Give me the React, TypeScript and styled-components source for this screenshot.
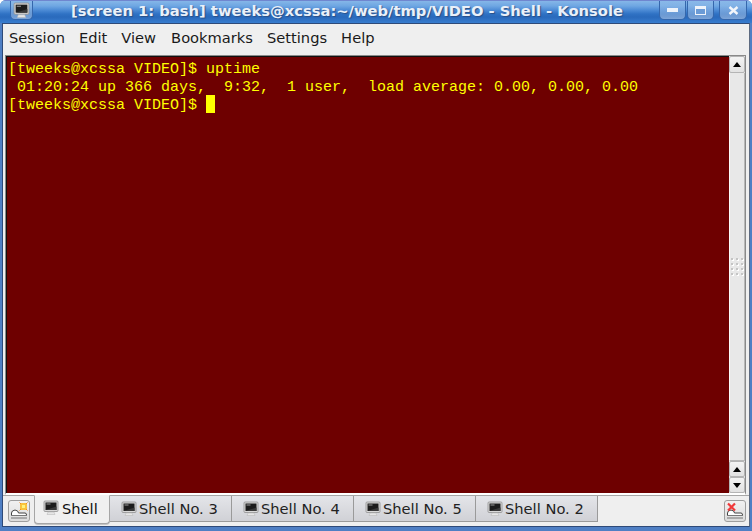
import React from 'react';
import styled, { createGlobalStyle } from 'styled-components';

const GlobalStyle = createGlobalStyle`
  html, body {
    margin: 0;
    padding: 0;
    background: #ffffff;
  }
  * {
    box-sizing: border-box;
  }
`;

const ScreenIcon = ({ size = 16 }: { size?: number }) => (
  <svg width={size} height={size} viewBox="0 0 16 16">
    <rect x="1" y="1" width="14" height="10.5" rx="1" fill="#d9d9d9" stroke="#8f8f8f" strokeWidth="0.8" />
    <rect x="2.5" y="2.5" width="11" height="7.5" fill="#1c1c1c" />
    <rect x="3.5" y="3.5" width="4" height="1" fill="#9a9a9a" />
    <path d="M2.5 10 L13.5 6.5 V10 Z" fill="#3a3a3a" />
    <path d="M5 12 H11 L12 14.5 H4 Z" fill="#e6e6e6" stroke="#b5b5b5" strokeWidth="0.5" />
  </svg>
);

const NewSessionIcon = () => (
  <svg width="18" height="18" viewBox="0 0 18 18">
    <path d="M1 16 H17 M1 13.5 H17" stroke="#777" strokeWidth="1" />
    <path d="M1.5 13 V11 Q1.5 8.5 5 8 Q8.5 8.5 8.5 11 H15 Q16.5 11 16.5 13" fill="#fff" stroke="#444" strokeWidth="1" />
    <rect x="10" y="1" width="7" height="7" fill="#f9c23c" />
    <rect x="12" y="3" width="3" height="3" fill="#fff27a" />
    <path d="M9.5 0.5 L11 2 M17.5 0.5 L16 2 M9.5 8.5 L11 7 M17.5 8.5 L16 7" stroke="#f08a24" strokeWidth="1" />
  </svg>
);

const CloseSessionIcon = () => (
  <svg width="18" height="18" viewBox="0 0 18 18">
    <path d="M1 16 H17 M1 13.5 H17" stroke="#777" strokeWidth="1" />
    <path d="M1.5 13 V11 Q1.5 8.5 5 8 Q8.5 8.5 8.5 11 H15 Q16.5 11 16.5 13" fill="#fff" stroke="#444" strokeWidth="1" />
    <path d="M2 1.5 L9 8.5 M9 1.5 L2 8.5" stroke="#f0393a" strokeWidth="2.2" />
  </svg>
);

const tabs = ['Shell No. 3', 'Shell No. 4', 'Shell No. 5', 'Shell No. 2'];
const menus = ['Session', 'Edit', 'View', 'Bookmarks', 'Settings', 'Help'];

const App: React.FC = () => (
  <>
    <GlobalStyle />
    <Window>
      <TitleBar>
        <AppButton>
          <ScreenIcon size={17} />
        </AppButton>
        <TitleText>[screen 1: bash] tweeks@xcssa:~/web/tmp/VIDEO - Shell - Konsole</TitleText>
        <WindowButtons>
          <WindowButton>
            <MinGlyph />
          </WindowButton>
          <WindowButton>
            <MaxGlyph />
          </WindowButton>
          <CloseButton>
            <svg width="11" height="9" viewBox="0 0 11 9">
              <path d="M1.5 1 L9.5 8 M9.5 1 L1.5 8" stroke="#f2f5fa" strokeWidth="2.4" />
            </svg>
          </CloseButton>
        </WindowButtons>
      </TitleBar>
      <Client>
        <MenuBar>
          {menus.map((m) => (
            <MenuItem key={m}>{m}</MenuItem>
          ))}
        </MenuBar>
        <TerminalFrame>
          <Terminal>
            <Line>[tweeks@xcssa VIDEO]$ uptime</Line>
            <Line> 01:20:24 up 366 days,  9:32,  1 user,  load average: 0.00, 0.00, 0.00</Line>
            <Line>
              [tweeks@xcssa VIDEO]$ <Cursor />
            </Line>
          </Terminal>
          <ScrollBar>
            <ScrollButton $top>
              <ArrowUp />
            </ScrollButton>
            <ScrollThumb>
              <Grip>
                {Array.from({ length: 12 }).map((_, i) => (
                  <GripDot key={i} />
                ))}
              </Grip>
            </ScrollThumb>
            <ScrollButton>
              <ArrowUp />
            </ScrollButton>
            <ScrollButton>
              <ArrowDown />
            </ScrollButton>
          </ScrollBar>
        </TerminalFrame>
        <TabBar>
          <CornerButton>
            <NewSessionIcon />
          </CornerButton>
          <ActiveTab>
            <ScreenIcon />
            <span>Shell</span>
          </ActiveTab>
          {tabs.map((t) => (
            <Tab key={t}>
              <ScreenIcon />
              <span>{t}</span>
            </Tab>
          ))}
          <TabSpacer />
          <CornerButton>
            <CloseSessionIcon />
          </CornerButton>
        </TabBar>
      </Client>
    </Window>
  </>
);

export default App;

const Window = styled.div`
  width: 752px;
  height: 531px;
  display: flex;
  flex-direction: column;
  overflow: hidden;
  border-radius: 6px 6px 0 0;
  background: #4f7fc4;
  padding: 0 2px 4px 2px;
  font-family: 'DejaVu Sans', sans-serif;
`;

const TitleBar = styled.div`
  height: 23px;
  flex: none;
  margin: 0 -2px;
  padding: 0 5px 0 10px;
  display: flex;
  align-items: flex-start;
  border-top: 1px solid #6f86cf;
  background: linear-gradient(to bottom, #85b6e8 0, #6ea6e2 5px, #4d8cd6 9px, #2f72c4 13px, #2a6abc 16px, #3a80d2 23px);
`;

const AppButton = styled.div`
  width: 23px;
  height: 19px;
  display: flex;
  align-items: center;
  justify-content: center;
  border-radius: 0 0 5px 5px;
  background: linear-gradient(to bottom, rgba(255, 255, 255, 0.04), rgba(255, 255, 255, 0.38));
  border: 1px solid #3567ac;
  border-top: none;
`;

const TitleText = styled.div`
  flex: 1;
  padding: 1px 0 0 38px;
  font-size: 14.72px;
  line-height: 17px;
  font-weight: 700;
  color: #e9f0f9;
  white-space: nowrap;
  text-shadow: 1px 1px 1px #2a4f86;
`;

const WindowButtons = styled.div`
  display: flex;
  gap: 1px;
`;

const WindowButton = styled.div`
  width: 27px;
  height: 19px;
  display: flex;
  align-items: center;
  justify-content: center;
  border-radius: 0 0 5px 5px;
  border: 1px solid #3567ac;
  border-top: none;
  background: linear-gradient(to bottom, rgba(255, 255, 255, 0.04), rgba(255, 255, 255, 0.38));
`;

const CloseButton = styled(WindowButton)`
  width: 28px;
  margin-left: 4px;
`;

const MinGlyph = styled.div`
  width: 11px;
  height: 4px;
  background: #eef3fa;
`;

const MaxGlyph = styled.div`
  width: 11px;
  height: 9px;
  border: 1px solid #eef3fa;
  border-top-width: 3px;
  background: #6b9bd6;
`;

const Client = styled.div`
  flex: 1;
  min-height: 0;
  display: flex;
  flex-direction: column;
  background: #efefef;
  border: 1px solid #2e4a78;
  border-right-color: #5d6a80;
`;

const MenuBar = styled.div`
  height: 30px;
  flex: none;
  display: flex;
  align-items: center;
  gap: 14px;
  padding: 0 0 3px 6px;
  background: #efefef;
`;

const MenuItem = styled.span`
  font-size: 14.67px;
  color: #1a1a1a;

  &:nth-child(4) {
    margin-left: 1px;
  }
`;

const TerminalFrame = styled.div`
  flex: 1;
  min-height: 0;
  display: flex;
  margin: 1px 3px 0 2px;
  border-top: 1px solid #8a8a8a;
  border-left: 1px solid #8a8a8a;
  border-right: 1px solid #8a8a8a;
  border-bottom: 2px solid #ffffff;
`;

const Terminal = styled.div`
  flex: 1;
  background: #6e0000;
  border-top: 1px solid #111;
  border-left: 1px solid #111;
  padding: 2px 0 0 1px;
  font-family: 'Liberation Mono', monospace;
  font-size: 15px;
  line-height: 22px;
  color: #ffff00;
`;

const Line = styled.div`
  height: 18px;
  white-space: pre;
`;

const Cursor = styled.span`
  display: inline-block;
  width: 9px;
  height: 18px;
  vertical-align: top;
  background: #ffff00;
`;

const ScrollBar = styled.div`
  width: 16px;
  flex: none;
  display: flex;
  flex-direction: column;
  background: #e4e4e4;
`;

const ScrollButton = styled.div<{ $top?: boolean }>`
  height: ${(p) => (p.$top ? '17px' : '16px')};
  flex: none;
  display: flex;
  align-items: center;
  justify-content: center;
  background: linear-gradient(to bottom, #f4f4f4, #e2e2e2);
  border: 1px solid #b4b4b4;
  border-radius: 2px;
`;

const ScrollThumb = styled.div`
  flex: 1;
  display: flex;
  align-items: center;
  justify-content: center;
  background: #e8e8e8;
  border-left: 1px solid #fbfbfb;
  border-right: 1px solid #b8b8b8;
  border-bottom: 1px solid #b8b8b8;
`;

const Grip = styled.div`
  display: grid;
  grid-template-columns: repeat(3, 2px);
  gap: 3px;
`;

const GripDot = styled.div`
  width: 2px;
  height: 2px;
  background: #c4c4c4;
  box-shadow: 1px 1px 0 #fff;
`;

const ArrowUp = styled.div`
  width: 0;
  height: 0;
  border-left: 4px solid transparent;
  border-right: 4px solid transparent;
  border-bottom: 5px solid #000;
`;

const ArrowDown = styled.div`
  width: 0;
  height: 0;
  border-left: 4px solid transparent;
  border-right: 4px solid transparent;
  border-top: 5px solid #000;
`;

const TabBar = styled.div`
  height: 31px;
  flex: none;
  display: flex;
  align-items: flex-start;
  padding: 0 3px 0 5px;
  background: #efefef;
  border-top: 1px solid #a6a6a6;
`;

const CornerButton = styled.div`
  width: 22px;
  height: 22px;
  margin-top: 4px;
  flex: none;
  display: flex;
  align-items: center;
  justify-content: center;
  background: linear-gradient(to bottom, #f1f1f1, #dcdcdc);
  border: 1px solid #9e9e9e;
  border-radius: 3px;
`;

const ActiveTab = styled.div`
  width: 76px;
  height: 29px;
  margin: -1px 0 0 4px;
  flex: none;
  display: flex;
  align-items: center;
  gap: 3px;
  padding: 0 0 3px 8px;
  font-size: 14.67px;
  color: #111;
  background: #f0f0f0;
  border: 1px solid #a6a6a6;
  border-top-color: #f0f0f0;
  border-radius: 0 0 4px 4px;
  box-shadow: 0 1px 0 #c4c4c4;
`;

const Tab = styled.div`
  width: 122px;
  height: 26px;
  flex: none;
  display: flex;
  align-items: center;
  gap: 2px;
  padding: 0 0 0 11px;
  font-size: 14.67px;
  color: #222;
  background: linear-gradient(to bottom, #e4e5e9, #d0d1d6);
  border-right: 1px solid #9a9a9a;
  border-bottom: 1px solid #9a9a9a;
`;

const TabSpacer = styled.div`
  flex: 1;
`;
